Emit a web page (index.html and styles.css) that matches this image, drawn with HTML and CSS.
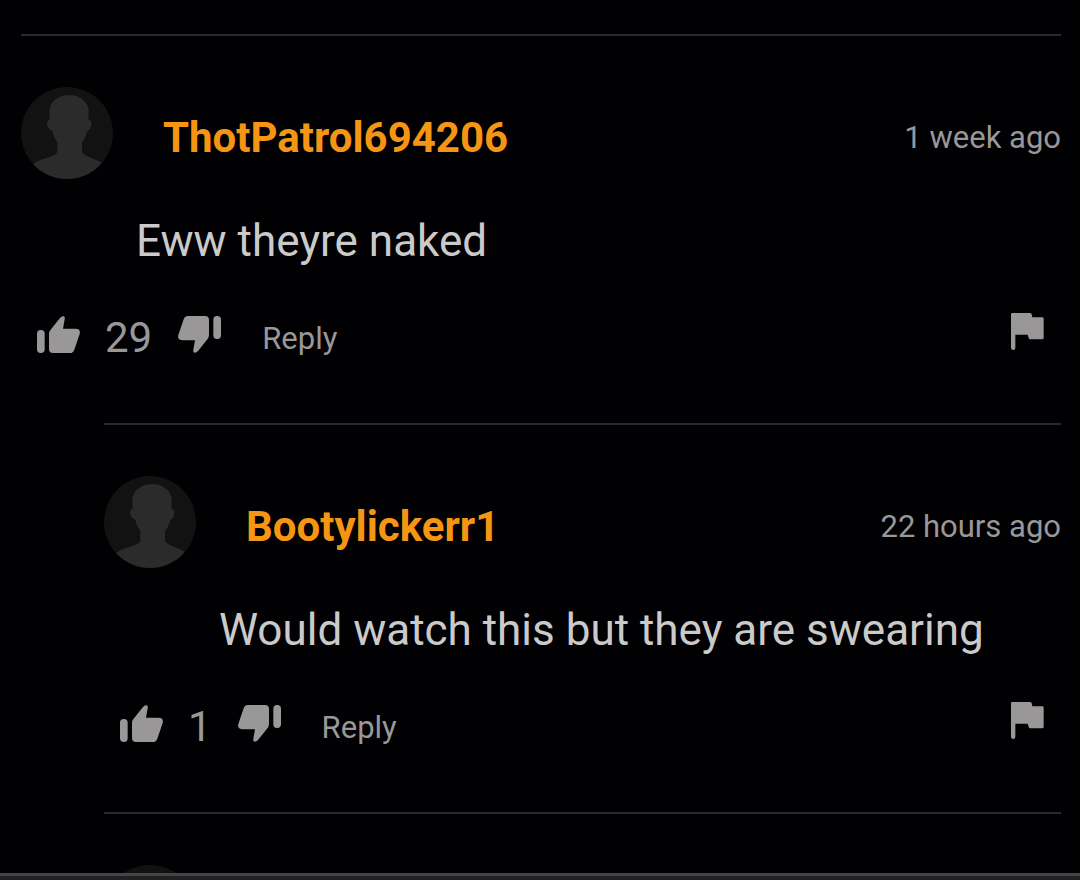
FILE: index.html
```html
<!DOCTYPE html>
<html lang="en">
<head>
<meta charset="utf-8">
<meta name="viewport" content="width=device-width, initial-scale=1">
<title>Comments</title>
<link rel="stylesheet" href="styles.css">
</head>
<body>
<svg class="sprite" aria-hidden="true">
  <symbol id="thumb" viewBox="0 0 129 111">
    <rect x="0" y="42" width="23" height="69" rx="11"/>
    <path d="M36 55Q36 46 42 40L69 6Q75-1 80 1Q85 3 83 10L78 38H115Q132 38 128 54L112 101Q108 111 99 111H48Q36 111 36 99Z"/>
  </symbol>
  <symbol id="flag" viewBox="93 40 99 111">
    <path d="M93 44Q93 40 97 40H150Q154 40 155 44L157 53H187Q191 53 191 57V114Q191 119 187 119H151Q147 119 146 115L143 105H106V144Q106 151 100 151Q93 151 93 144Z"/>
  </symbol>
  <symbol id="person" viewBox="0 0 276 276">
    <path d="M145 24C177 24 203 45 203 72L202 98C212 98 213 107 209 119C207 127 204 130 199 131C197 145 190 155 183 166V194C188 207 219 213 243 228L276 276H0L37 230C60 213 105 209 109 194V166C102 155 96 145 94 131C88 130 83 126 80 118C76 107 79 98 86 98L85 72C85 45 112 24 145 24Z"/>
  </symbol>
</svg>
<main class="comments">
  <article class="comment">
    <header class="head">
      <svg class="avatar" aria-hidden="true"><use href="#person"/></svg>
      <a class="name" href="#">ThotPatrol694206</a>
      <time class="time">1 week ago</time>
    </header>
    <p class="text">Eww theyre naked</p>
    <div class="actions">
      <button class="icon-btn" type="button" aria-label="Like"><svg class="thumb"><use href="#thumb"/></svg></button>
      <span class="count">29</span>
      <button class="icon-btn" type="button" aria-label="Dislike"><svg class="thumb down"><use href="#thumb"/></svg></button>
      <button class="reply" type="button">Reply</button>
      <button class="icon-btn report" type="button" aria-label="Report"><svg class="flag"><use href="#flag"/></svg></button>
    </div>
  </article>
  <article class="comment nested">
    <header class="head">
      <svg class="avatar" aria-hidden="true"><use href="#person"/></svg>
      <a class="name" href="#">Bootylickerr1</a>
      <time class="time">22 hours ago</time>
    </header>
    <p class="text">Would watch this but they are swearing</p>
    <div class="actions">
      <button class="icon-btn" type="button" aria-label="Like"><svg class="thumb"><use href="#thumb"/></svg></button>
      <span class="count">1</span>
      <button class="icon-btn" type="button" aria-label="Dislike"><svg class="thumb down"><use href="#thumb"/></svg></button>
      <button class="reply" type="button">Reply</button>
      <button class="icon-btn report" type="button" aria-label="Report"><svg class="flag"><use href="#flag"/></svg></button>
    </div>
  </article>
  <article class="comment nested">
    <header class="head">
      <svg class="avatar" aria-hidden="true"><use href="#person"/></svg>
    </header>
  </article>
</main>
<div class="bottom-bar"></div>
</body>
</html>
```
FILE: styles.css
```css
* {
  box-sizing: border-box;
}

body {
  display: flex;
  flex-direction: column;
  height: 100vh;
  margin: 0;
  background: #010002;
  color: #999798;
  font-family: Roboto, "Liberation Sans", sans-serif;
}

.sprite {
  position: absolute;
  width: 0;
  height: 0;
}

.comments {
  flex: 1;
  min-height: 0;
  overflow: hidden;
  padding: 34px 19px 0 21px;
}

.comment {
  padding: 51px 0 58px;
  border-top: 2px solid #29282a;
}

.nested {
  margin-left: 83px;
}

.head {
  display: flex;
  align-items: center;
}

.avatar {
  flex: none;
  width: 92px;
  height: 92px;
  border-radius: 50%;
  background: #121212;
  fill: #2b2b2b;
}

.name {
  margin: 10px 0 0 50px;
  color: #f59514;
  font-size: 42px;
  font-weight: 700;
  line-height: 50px;
  text-decoration: none;
}

.time {
  margin: 10px 0 0 auto;
  font-size: 31px;
  line-height: 50px;
}

.text {
  margin: 36px 0 46px;
  padding-left: 115px;
  color: #cbcacb;
  font-size: 44px;
  line-height: 52px;
}

.actions {
  display: flex;
  align-items: flex-start;
  padding: 0 17px 0 16px;
}

button {
  padding: 0;
  border: 0;
  background: none;
  color: inherit;
  font-family: inherit;
  cursor: pointer;
}

.icon-btn svg {
  display: block;
  fill: #999798;
}

.thumb {
  width: 43px;
  height: 37px;
  margin-top: 3px;
}

.down {
  transform: rotate(180deg);
}

.count {
  margin: 0 26px 0 25px;
  font-size: 42px;
  line-height: 50px;
}

.reply {
  margin-left: 41px;
  font-size: 31px;
  line-height: 52px;
}

.report {
  margin-left: auto;
}

.flag {
  width: 33px;
  height: 37px;
}

.bottom-bar {
  flex: none;
  height: 7px;
  border-top: 3px solid #454446;
  background: #212022;
}
```
